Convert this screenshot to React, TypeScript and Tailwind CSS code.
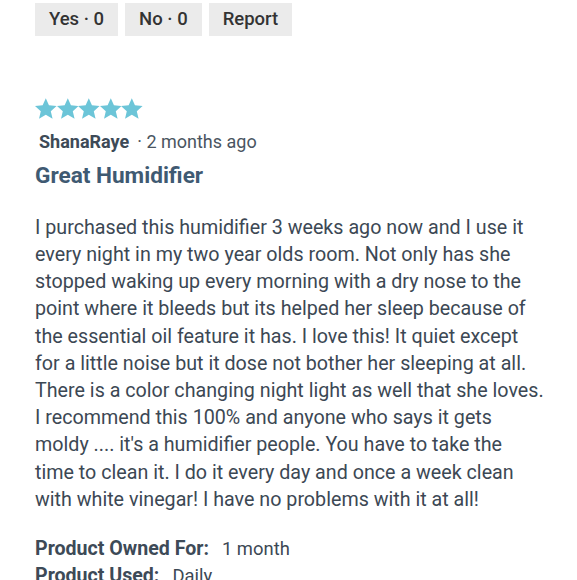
import React from 'react';

const body =
  "I purchased this humidifier 3 weeks ago now and I use it every night in my two year olds room. Not only has she stopped waking up every morning with a dry nose to the point where it bleeds but its helped her sleep because of the essential oil feature it has. I love this! It quiet except for a little noise but it dose not bother her sleeping at all. There is a color changing night light as well that she loves. I recommend this 100% and anyone who says it gets moldy .... it's a humidifier people. You have to take the time to clean it. I do it every day and once a week clean with white vinegar! I have no problems with it at all!";

function Star() {
    return (
        <svg viewBox="1 1 22 22" className="w-[21.6px] h-[21.6px]" fill="#6cc5d8">
            <path d="M12 1.3l3.2 7.2 7.8.7-5.9 5.2 1.8 7.7L12 18.1l-6.9 4 1.8-7.7-5.9-5.2 7.8-.7z" />
        </svg>
    );
}

export default function App() {
    return (
        <div className="w-[577px] h-[580px] overflow-hidden bg-white font-['Roboto',sans-serif] text-[#3c4854]">
            <div className="pl-[35px] pr-[32.5px]">
                {/* --- VOTES --- */}
                <div className="flex gap-[7px] pt-[3px]">
                    {['Yes · 0', 'No · 0', 'Report'].map((label, i) => (
                        <button key={i} className="h-[33px] px-[14px] bg-[#ebebeb] text-[#333] text-[18.5px] font-medium">
                            {label}
                        </button>
                    ))}
                </div>

                {/* --- REVIEW --- */}
                <div className="mt-[62px] flex">
                    {[0, 1, 2, 3, 4].map((i) => <Star key={i} />)}
                </div>
                <div className="mt-[8px] flex items-baseline text-[18px]">
                    <span className="font-bold text-[#3d4a57] ml-[4px]">ShanaRaye</span>
                    <span className="ml-[8px] text-[#4a5561]">· 2 months ago</span>
                </div>
                <h2 className="mt-[7px] text-[22.6px] font-bold text-[#3f5a72] leading-tight">Great Humidifier</h2>

                <p className="mt-[24px] text-[19.7px] leading-[27.2px] text-[#3c4854]">{body}</p>

                <div className="mt-[22px] text-[18.4px] leading-[27px]">
                    <div>
                        <span className="font-bold text-[19.6px] text-[#3d4a57]">Product Owned For:</span>
                        <span className="ml-[13px]">1 month</span>
                    </div>
                    <div>
                        <span className="font-bold text-[19.6px] text-[#3d4a57]">Product Used:</span>
                        <span className="ml-[13px]">Daily</span>
                    </div>
                </div>
            </div>
        </div>
    );
}
